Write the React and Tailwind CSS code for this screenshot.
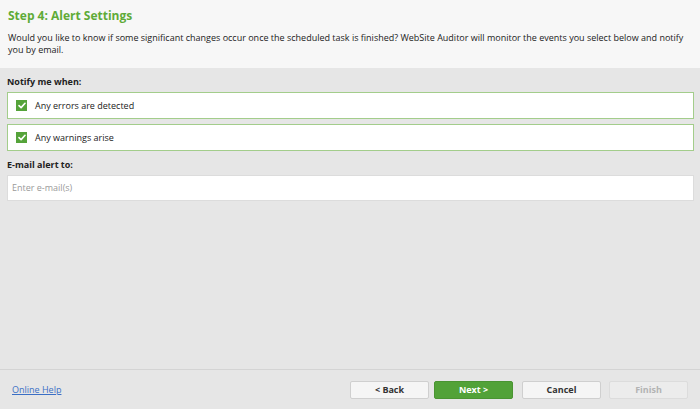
import React from "react";

function Check() {
  return (
    <span className="flex h-[11px] w-[11px] items-center justify-center bg-[#55a33a]">
      <svg width="8" height="7" viewBox="0 0 8 7">
        <path d="M1 3.6 L3.1 5.6 L7 1.3" stroke="white" strokeWidth="1.6" fill="none" strokeLinecap="round" strokeLinejoin="round" />
      </svg>
    </span>
  );
}

function Row({ label }) {
  return (
    <div className="flex h-[27px] items-center gap-[8px] border border-[#a3cd8b] bg-white pl-[8px]">
      <Check />
      <span className="text-[9px] text-[#222]">{label}</span>
    </div>
  );
}

function Btn({ children, variant }) {
  const cls =
    variant === "primary"
      ? "bg-[#52a238] border-[#4a9432] text-white"
      : variant === "disabled"
      ? "bg-[#ececec] border-[#dcdcdc] text-[#b3b3b3]"
      : "bg-[#f5f5f5] border-[#cfcfcf] text-[#333]";
  return (
    <div className={`flex h-[18px] w-[79px] items-center justify-center rounded-[2px] border text-[9px] font-bold ${cls}`}>
      {children}
    </div>
  );
}

export default function App() {
  return (
    <div
      className="flex h-[409px] w-[700px] flex-col bg-[#e6e6e6]"
      style={{ fontFamily: '"Open Sans", "DejaVu Sans", sans-serif' }}
    >
      <div className="h-[68px] bg-[#f7f7f7] px-[8px] pt-[8px]">
        <div className="text-[12px] font-bold leading-[16px] text-[#5fab37]">Step 4: Alert Settings</div>
        <div className="mt-[8px] text-[9px] leading-[12px] text-[#222]">
          Would you like to know if some significant changes occur once the scheduled task is finished? WebSite Auditor will monitor the events you select below and notify you by email.
        </div>
      </div>
      <div className="flex flex-col px-[7px]">
        <div className="mt-[8px] text-[9px] font-bold leading-[12px] text-[#222]">Notify me when:</div>
        <div className="mt-[4px] flex w-[687px] flex-col gap-[5px]">
          <Row label="Any errors are detected" />
          <Row label="Any warnings arise" />
        </div>
        <div className="mt-[8px] text-[9px] font-bold leading-[12px] text-[#222]">E-mail alert to:</div>
        <div className="mt-[4px] flex h-[26px] w-[687px] items-center border border-[#dcdcdc] bg-white pl-[4px] text-[9px] text-[#9a9a9a]">
          Enter e-mail(s)
        </div>
      </div>
      <div className="flex-1" />
      <div className="flex h-[40px] items-center border-t border-[#d4d4d4] pl-[12px] pr-[12px]">
        <span className="text-[9px] text-[#3b6fc5] underline">Online Help</span>
        <div className="flex-1" />
        <div className="flex items-center">
          <Btn>&lt; Back</Btn>
          <div className="w-[5px]" />
          <Btn variant="primary">Next &gt;</Btn>
          <div className="w-[9px]" />
          <Btn>Cancel</Btn>
          <div className="w-[8px]" />
          <Btn variant="disabled">Finish</Btn>
        </div>
      </div>
    </div>
  );
}
